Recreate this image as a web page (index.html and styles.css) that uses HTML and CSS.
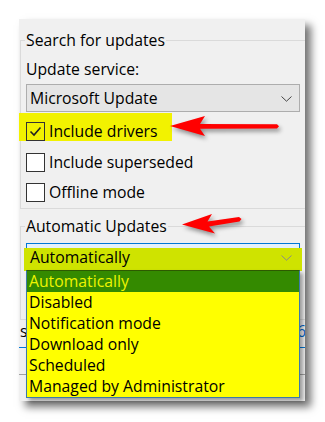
FILE: index.html
```html
<!DOCTYPE html>
<html>
<head>
<meta charset="utf-8">
<link rel="stylesheet" href="styles.css">
</head>
<body>
<div class="stage">
  <div class="panel">
    <fieldset class="group g1">
      <legend>Search for updates</legend>
      <div class="label">Update service:</div>
      <div class="combo">
        <span>Microsoft Update</span>
        <svg class="chev" width="11" height="6" viewBox="0 0 11 6"><path d="M0.5 0.5 L5.5 5.2 L10.5 0.5" fill="none" stroke="#444" stroke-width="1"/></svg>
      </div>
      <div class="row hl">
        <span class="cb checked"><svg width="17" height="17" viewBox="0 0 17 17"><path d="M3.5 8.5 L7 12 L13.5 4.5" fill="none" stroke="#222" stroke-width="1.6"/></svg></span>
        <span class="txt">Include drivers</span>
      </div>
      <div class="row r2">
        <span class="cb"></span>
        <span class="txt">Include superseded</span>
      </div>
      <div class="row r3">
        <span class="cb"></span>
        <span class="txt">Offline mode</span>
      </div>
    </fieldset>
    <fieldset class="group g2">
      <legend>Automatic Updates</legend>
      <div class="combo focus">
        <span class="marker"></span>
        <span class="val">Automatically</span>
        <svg class="chev" width="11" height="6" viewBox="0 0 11 6"><path d="M0.5 0.5 L5.5 5.2 L10.5 0.5" fill="none" stroke="#8a8a8a" stroke-width="1"/></svg>
      </div>
    </fieldset>
    <div class="under">
      <span>s</span><span class="link">6</span>
    </div>
    <div class="tabline"></div>
    <div class="greyline"></div>
  </div>
  <ul class="list">
    <li class="sel">Automatically</li>
    <li>Disabled</li>
    <li>Notification mode</li>
    <li>Download only</li>
    <li>Scheduled</li>
    <li>Managed by Administrator</li>
  </ul>
  <svg class="arrows" width="325" height="422" viewBox="0 0 325 422">
    <polygon points="170,126 205,116 200,124 277,124.2 279,126.2 277,128.6 200,128.8 205,136" fill="#ff0000"/>
    <polygon points="182,224.5 212,214 207.5,221.5 239,217 241.5,219 239.5,221.6 209,226.5 215,233.5" fill="#ff0000"/>
  </svg>
</div>
</body>
</html>
```

FILE: styles.css
```css
html, body {
  margin: 0;
  padding: 0;
  background: #ffffff;
}

.stage {
  position: relative;
  width: 325px;
  height: 422px;
  padding: 19px 0 0 19px;
  box-sizing: border-box;
  font-family: "Open Sans", "Noto Sans", sans-serif;
  font-size: 15.75px;
  line-height: 21px;
  color: #000;
}

.panel {
  width: 286px;
  height: 382px;
  background: #f0f0f0;
  overflow: hidden;
  box-shadow: 6px 6px 8px rgba(0, 0, 0, 0.55);
}

.group {
  margin: 0 -20px 0 1px;
  padding: 0 0 0 5px;
  border: 1px solid #dadada;
  border-right: none;
  min-width: 0;
}

.group legend {
  padding: 0 1px;
  margin-left: -1px;
  line-height: 21px;
}

.g1 {
  margin-top: 11px;
  padding-bottom: 6px;
}

.g2 {
  margin-top: 7px;
  height: 104px;
  box-sizing: border-box;
}

.label {
  margin-top: 8px;
}

.combo {
  position: relative;
  display: flex;
  align-items: flex-start;
  width: 274px;
  height: 28px;
  box-sizing: border-box;
  margin-top: 4px;
  padding: 3px 0 0 3px;
  background: #e5e5e5;
  border: 1px solid #adadad;
}

.combo .chev {
  margin-left: auto;
  margin-right: 7px;
  margin-top: 8px;
}

.combo.focus {
  margin-top: 6px;
  background: #e5f1fb;
  border-color: #0078d7;
}

.combo .marker {
  position: absolute;
  left: -3px;
  right: -3px;
  top: 4px;
  bottom: -1px;
  background: #cfe300;
}

.combo .val,
.combo.focus .chev {
  position: relative;
}

.row {
  display: flex;
  align-items: center;
  height: 19px;
}

.row.hl {
  box-sizing: border-box;
  height: 28px;
  width: 153px;
  margin: 1px 0 0 -7px;
  padding: 9px 0 0 7px;
  background: #f2f200;
}

.row.r2 {
  margin-top: 12px;
}

.row.r3 {
  margin-top: 11px;
}

.cb {
  display: flex;
  align-items: center;
  justify-content: center;
  width: 19px;
  height: 19px;
  box-sizing: border-box;
  border: 1px solid #333;
  background: #fff;
  flex: none;
}

.cb.checked {
  background: transparent;
}

.txt {
  margin-left: 4px;
}

.under {
  display: flex;
  justify-content: space-between;
  margin-top: 1px;
  padding-left: 1px;
  width: 286px;
}

.under .link {
  color: #0066cc;
}

.tabline {
  height: 5px;
  border-bottom: 1px solid #0078d7;
}

.greyline {
  height: 26px;
  border-bottom: 1px solid #a0a0a0;
}

.list {
  position: absolute;
  left: 26px;
  top: 270px;
  width: 274px;
  margin: 0;
  padding: 0;
  list-style: none;
  box-sizing: border-box;
  background: #ffff00;
  border: 1px solid #3c7aa8;
  border-top-color: #2d5a00;
  box-shadow: 3px 3px 4px rgba(0, 0, 0, 0.35);
}

.list li {
  height: 21px;
  line-height: 21px;
  padding-left: 2px;
}

.list li.sel {
  background: #348a00;
  color: #eef500;
}

.arrows {
  position: absolute;
  left: 0;
  top: 0;
  pointer-events: none;
  filter: drop-shadow(2px 3px 2px rgba(0, 0, 0, 0.4));
}
```
